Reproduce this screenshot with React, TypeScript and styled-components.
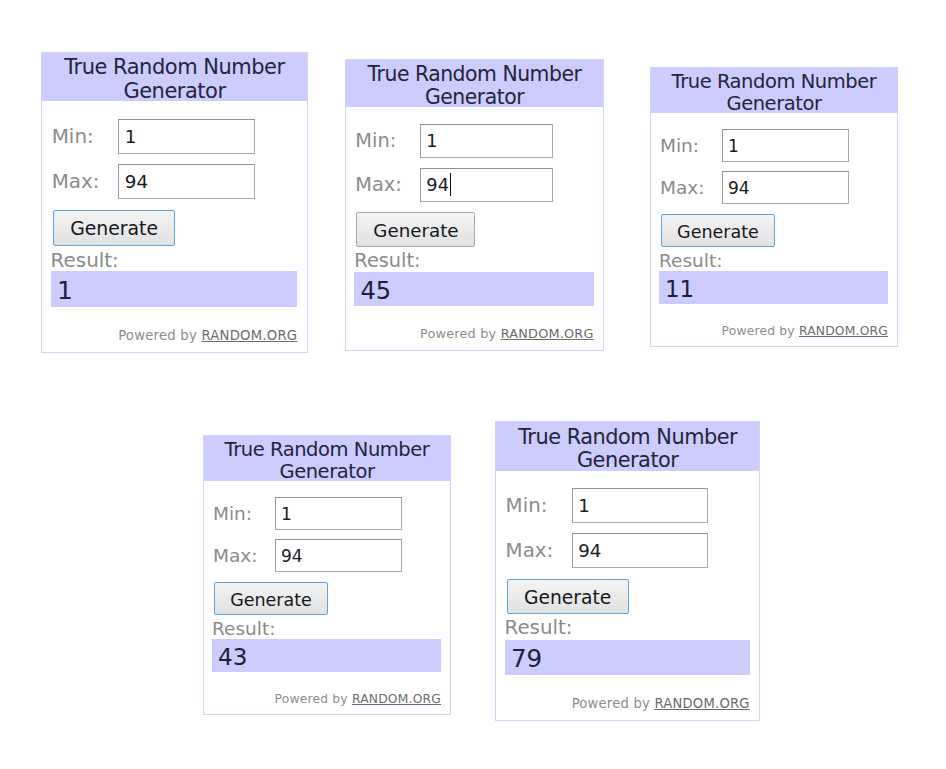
import React from 'react';
import styled, { createGlobalStyle } from 'styled-components';

const Global = createGlobalStyle`
  html, body { margin: 0; padding: 0; background: #ffffff; }
  body { font-family: "DejaVu Sans", Verdana, sans-serif; }
`;

const u = (n: number) => `calc(${n}px * var(--s))`;

const Page = styled.main`
  box-sizing: border-box;
  width: 946px;
  height: 769px;
  overflow: hidden;
  padding-top: 52px;
  display: flex;
  flex-direction: column;
`;

const Row = styled.div<{ $top: number }>`
  display: flex;
  align-items: flex-start;
  margin-top: ${p => p.$top}px;
`;

const Card = styled.section<{ $scale: number; $left: number; $top: number }>`
  --s: ${p => p.$scale};
  box-sizing: border-box;
  flex-shrink: 0;
  width: ${u(248)};
  height: ${u(280)};
  margin-left: ${p => p.$left}px;
  margin-top: ${p => p.$top}px;
  border: 1px solid #d2d2f4;
  background: #ffffff;
  display: flex;
  flex-direction: column;
`;

const Header = styled.h2`
  box-sizing: border-box;
  margin: 0;
  height: ${u(45)};
  padding-top: ${u(3)};
  background: #ccccff;
  color: #24243a;
  font-weight: normal;
  font-size: ${u(19.5)};
  line-height: ${u(22)};
  letter-spacing: ${u(-0.45)};
  text-align: center;
  white-space: nowrap;
`;

const Body = styled.div`
  display: flex;
  flex-direction: column;
  padding: ${u(16)} ${u(9)} 0 ${u(8)};
`;

const FieldRow = styled.div`
  display: flex;
  align-items: center;
  height: ${u(33)};
  & + & { margin-top: ${u(9)}; }
`;

const Label = styled.label`
  box-sizing: border-box;
  width: ${u(63)};
  padding-left: ${u(1)};
  font-size: ${u(18.5)};
  color: #8b8b8b;
`;

const Field = styled.div`
  box-sizing: border-box;
  width: ${u(127)};
  height: ${u(33)};
  border: 1px solid #ababab;
  border-top-color: #8f8f8f;
  border-left-color: #9a9a9a;
  background: #ffffff;
  padding-left: ${u(5)};
  display: flex;
  align-items: center;
  font-size: ${u(17)};
  color: #1a1a24;
`;

const Caret = styled.span`
  display: inline-block;
  width: 1px;
  height: ${u(22)};
  margin-left: 1px;
  background: #111111;
`;

const Button = styled.button<{ $focused: boolean }>`
  align-self: flex-start;
  box-sizing: border-box;
  margin: ${u(10)} 0 0 ${u(2)};
  width: ${u(114)};
  height: ${u(33)};
  padding: ${u(2)} 0 0;
  border: 1px solid ${p => (p.$focused ? '#5aa6e4' : '#a9a9a9')};
  border-radius: 2px;
  background: linear-gradient(#f4f4f4, #e1e1e1);
  font-family: inherit;
  font-size: ${u(17.5)};
  color: #16161e;
`;

const ResultLabel = styled.div`
  height: ${u(24)};
  line-height: ${u(27)};
  font-size: ${u(18.5)};
  color: #8b8b8b;
`;

const ResultBar = styled.output`
  box-sizing: border-box;
  display: flex;
  align-items: center;
  height: ${u(33)};
  padding: ${u(3)} 0 0 ${u(6)};
  background: #ccccff;
  font-size: ${u(23)};
  color: #20203a;
`;

const Powered = styled.p`
  margin: ${u(17)} 0 0;
  line-height: ${u(20)};
  text-align: right;
  font-size: ${u(12.3)};
  letter-spacing: ${u(0.2)};
  color: #8d8d8d;
  white-space: nowrap;
`;

const OrgLink = styled.a`
  color: #6c6c6c;
  text-decoration: underline;
`;

type Gen = {
  scale: number;
  left: number;
  top: number;
  result: string;
  focused: boolean;
  caret?: boolean;
};

const Widget: React.FC<Gen> = ({ scale, left, top, result, focused, caret }) => (
  <Card $scale={scale} $left={left} $top={top}>
    <Header>
      True Random Number
      <br />
      Generator
    </Header>
    <Body>
      <FieldRow>
        <Label>Min:</Label>
        <Field>1</Field>
      </FieldRow>
      <FieldRow>
        <Label>Max:</Label>
        <Field>
          94
          {caret && <Caret />}
        </Field>
      </FieldRow>
      <Button $focused={focused}>Generate</Button>
      <ResultLabel>Result:</ResultLabel>
      <ResultBar>{result}</ResultBar>
      <Powered>
        Powered by <OrgLink>RANDOM.ORG</OrgLink>
      </Powered>
    </Body>
  </Card>
);

const topRow: Gen[] = [
  { scale: 1.0766, left: 41, top: 0, result: '1', focused: true },
  { scale: 1.0444, left: 37, top: 7, result: '45', focused: false, caret: true },
  { scale: 1, left: 46, top: 15, result: '11', focused: true },
];

const bottomRow: Gen[] = [
  { scale: 1, left: 203, top: 14, result: '43', focused: true },
  { scale: 1.07, left: 44, top: 0, result: '79', focused: true },
];

export default function App() {
  return (
    <>
      <Global />
      <Page>
        <Row $top={0}>
          {topRow.map((g, i) => (
            <Widget key={i} {...g} />
          ))}
        </Row>
        <Row $top={68}>
          {bottomRow.map((g, i) => (
            <Widget key={i} {...g} />
          ))}
        </Row>
      </Page>
    </>
  );
}
